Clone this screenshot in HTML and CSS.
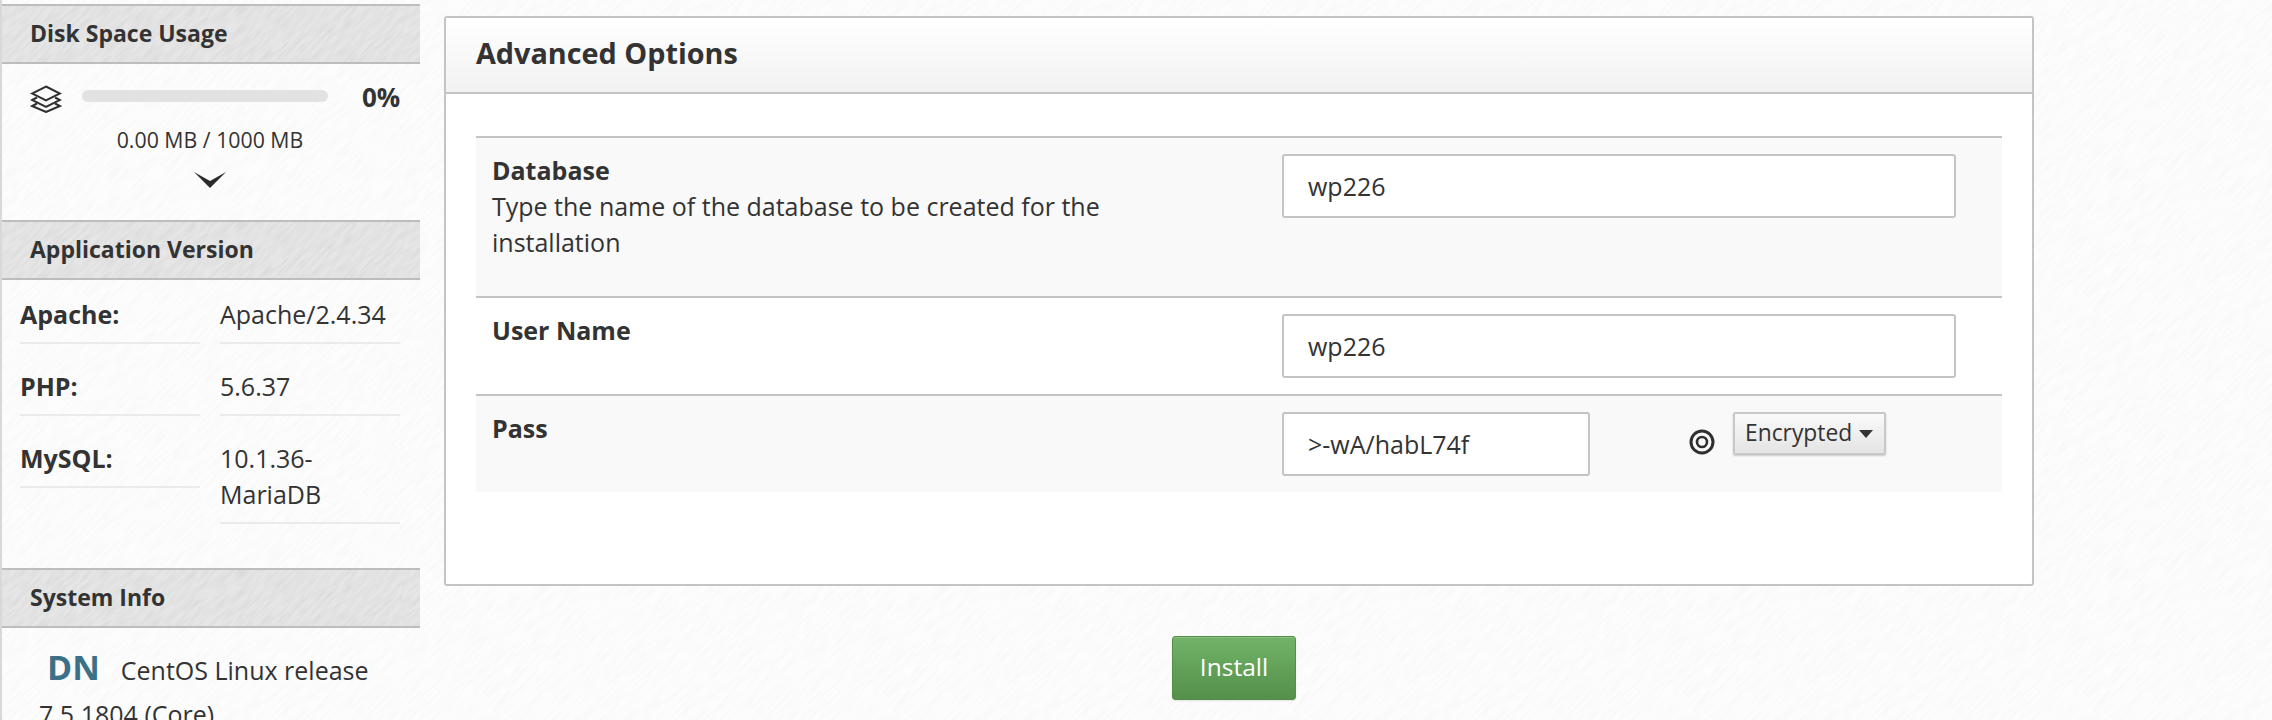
FILE: index.html
```html
<!DOCTYPE html>
<html lang="en">
<head>
<meta charset="utf-8">
<title>Advanced Options</title>
<link rel="stylesheet" href="styles.css">
</head>
<body>
<div class="page">
  <aside class="sidebar">
    <h3 class="side-head">Disk Space Usage</h3>
    <section class="disk">
      <div class="disk-row">
        <svg class="layers" viewBox="0 0 32 28" width="32" height="28" fill="none" stroke="#2f2f2f" stroke-width="2" stroke-linejoin="miter"><path d="M16 1.5 30 8.5 16 15.5 2 8.5Z"/><path d="M7 12.5 2 15 16 22 30 15 25 12.5"/><path d="M7 18.5 2 21 16 27 30 21 25 18.5"/></svg>
        <div class="bar"></div>
        <b class="pct">0%</b>
      </div>
      <div class="disk-text">0.00 MB / 1000 MB</div>
      <svg class="chev" viewBox="0 0 32 16" width="32" height="16"><path d="M0 0 16 9 32 0 16 16Z" fill="#2b2b2b"/></svg>
    </section>
    <h3 class="side-head">Application Version</h3>
    <dl class="versions">
      <dt>Apache:</dt><dd>Apache/2.4.34</dd>
      <dt>PHP:</dt><dd>5.6.37</dd>
      <dt>MySQL:</dt><dd>10.1.36-MariaDB</dd>
    </dl>
    <h3 class="side-head">System Info</h3>
    <p class="sysinfo"><span class="dn">DN</span>CentOS Linux release 7.5.1804 (Core)</p>
  </aside>
  <main class="main">
    <section class="panel">
      <h2 class="panel-head">Advanced Options</h2>
      <div class="panel-body">
        <div class="row row-tall">
          <div class="label"><b>Database</b><br>Type the name of the database to be created for the installation</div>
          <div class="control"><input class="field" value="wp226"></div>
        </div>
        <div class="row row-plain">
          <div class="label"><b>User Name</b></div>
          <div class="control"><input class="field" value="wp226"></div>
        </div>
        <div class="row">
          <div class="label"><b>Pass</b></div>
          <div class="control control-pass">
            <input class="field field-short" value="&gt;-wA/habL74f">
            <svg class="target" viewBox="0 0 26 26" width="26" height="26" fill="none" stroke="#2f2f2f"><circle cx="13" cy="13" r="11" stroke-width="3"/><circle cx="13" cy="13" r="5" stroke-width="2.6"/></svg>
            <button class="enc">Encrypted<span class="caret"></span></button>
          </div>
        </div>
      </div>
    </section>
    <div class="actions"><button class="install">Install</button></div>
  </main>
</div>
</body>
</html>
```
FILE: styles.css
```css
* { box-sizing: border-box; }
html, body { margin: 0; height: 720px; overflow: hidden; }
body {
  font-family: "Open Sans", "Noto Sans", sans-serif;
  font-size: 25px;
  line-height: 36px;
  color: #333;
  background-color: #fdfdfd;
  background-image: url("data:image/svg+xml,%3Csvg xmlns='http://www.w3.org/2000/svg' width='400' height='400'%3E%3Cfilter id='n' x='0' y='0' width='100%25' height='100%25'%3E%3CfeTurbulence type='fractalNoise' baseFrequency='.04 .4' numOctaves='2' seed='4'/%3E%3CfeColorMatrix values='0 0 0 0 0 0 0 0 0 0 0 0 0 0 0 .045 0 0 0 -.016'/%3E%3C/filter%3E%3Cg transform='rotate(-45 200 200)'%3E%3Crect x='-200' y='-200' width='800' height='800' filter='url(%23n)'/%3E%3C/g%3E%3C/svg%3E");
}
.page { display: flex; align-items: flex-start; }
.sidebar {
  width: 420px;
  flex: none;
  height: 720px;
  border-left: 2px solid #d8d8d8;
  padding-top: 4px;
  overflow: hidden;
}
.side-head {
  margin: 0;
  height: 60px;
  padding-left: 28px;
  border-top: 2px solid #bdbdbd;
  border-bottom: 2px solid #bdbdbd;
  background-color: #e6e6e6;
  background-image: url("data:image/svg+xml,%3Csvg xmlns='http://www.w3.org/2000/svg' width='400' height='400'%3E%3Cfilter id='n' x='0' y='0' width='100%25' height='100%25'%3E%3CfeTurbulence type='fractalNoise' baseFrequency='.05 .35' numOctaves='2' seed='9'/%3E%3CfeColorMatrix values='0 0 0 0 0 0 0 0 0 0 0 0 0 0 0 .11 0 0 0 -.04'/%3E%3C/filter%3E%3Cg transform='rotate(-45 200 200)'%3E%3Crect x='-200' y='-200' width='800' height='800' filter='url(%23n)'/%3E%3C/g%3E%3C/svg%3E");
  font-size: 23px;
  font-weight: 700;
  line-height: 54px;
  color: #333;
}
.disk { height: 156px; padding: 21px 0 0 28px; }
.disk-row { display: flex; align-items: center; height: 28px; }
.layers { flex: none; }
.bar { width: 246px; height: 12px; margin: -6px 0 0 20px; border-radius: 6px; background: #e2e2e2; }
.pct { margin: -4px 0 0 34px; font-size: 26px; }
.disk-text { width: 360px; padding-top: 9px; text-align: center; font-size: 21.3px; line-height: 36px; color: #333; }
.chev { display: block; margin: 14px 0 0 164px; }
.versions {
  display: grid;
  grid-template-columns: 180px 180px;
  column-gap: 20px;
  align-items: start;
  align-content: start;
  margin: 0;
  height: 288px;
  padding: 16px 0 0 18px;
  font-size: 25px;
}
.versions dt, .versions dd { margin: 0 0 24px; padding-bottom: 10px; border-bottom: 2px solid #ebebeb; line-height: 36px; }
.versions dt { font-weight: 700; }
.sysinfo { margin: 0; padding: 17px 18px 0 37px; font-size: 25px; line-height: 44px; }
.dn { margin: 0 21px 0 8px; font-size: 34px; font-weight: 700; color: #3b7188; }
.main { flex: none; width: 1590px; margin: 16px 0 0 24px; }
.panel { height: 570px; background: #fff; border: 2px solid #c4c4c4; border-radius: 3px; }
.panel-head {
  margin: 0;
  height: 76px;
  padding-left: 30px;
  border-bottom: 2px solid #c4c4c4;
  background: linear-gradient(#fff, #f2f2f2);
  font-size: 28.8px;
  font-weight: 700;
  line-height: 70px;
  color: #333;
}
.panel-body { padding: 42px 30px 0 30px; }
.row {
  display: flex;
  height: 98px;
  border-top: 2px solid #c4c4c4;
  background: #f9f9f9;
}
.row-tall { height: 160px; }
.row-plain { background: #fff; }
.label { width: 806px; flex: none; padding: 14px 0 0 16px; font-size: 25px; }
.label b { font-weight: 700; }
.row-tall .label { padding-right: 130px; }
.control { padding-top: 16px; }
.control-pass { display: flex; align-items: flex-start; }
.field {
  display: block;
  width: 674px;
  height: 64px;
  padding: 0 24px;
  border: 2px solid #c4c4c4;
  border-radius: 3px;
  background: #fff;
  font: inherit;
  font-size: 25px;
  color: #333;
}
.field-short { width: 308px; }
.target { margin: 17px 0 0 99px; }
.enc {
  display: flex;
  align-items: center;
  height: 43px;
  margin-left: 18px;
  padding: 0 11px 2px 10px;
  border: 2px solid #c8c8c8;
  border-radius: 2px;
  background: linear-gradient(#fafafa, #e4e4e4);
  box-shadow: 0 1px 2px rgba(0,0,0,.2);
  font: inherit;
  font-size: 22.8px;
  line-height: 36px;
  color: #333;
}
.caret {
  display: block;
  margin: 2px 0 0 7px;
  border-top: 8px solid #333;
  border-left: 7px solid transparent;
  border-right: 7px solid transparent;
}
.actions { padding: 50px 0 0 728px; }
.install {
  display: block;
  width: 124px;
  height: 64px;
  padding-bottom: 4px;
  border: 1px solid #548f47;
  border-radius: 3px;
  background: linear-gradient(#72b268, #54904a);
  box-shadow: inset 0 1px 0 rgba(255,255,255,.2), 0 1px 2px rgba(0,0,0,.1);
  font: inherit;
  font-size: 24.5px;
  color: #fff;
}
```
